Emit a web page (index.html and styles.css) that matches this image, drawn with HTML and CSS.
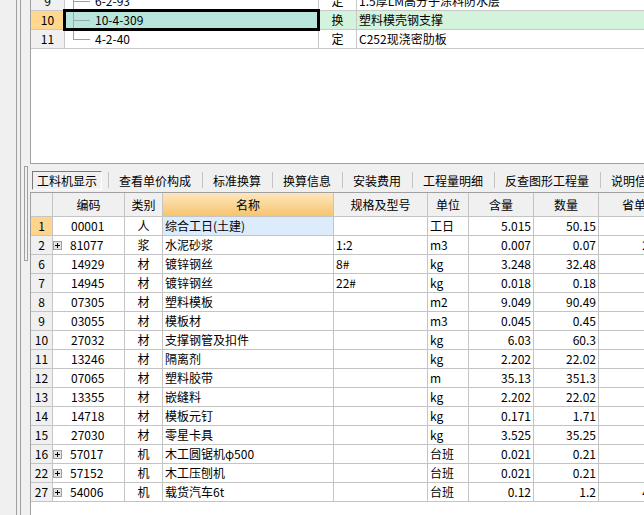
FILE: index.html
```html
<!DOCTYPE html>
<html lang="zh-CN">
<head>
<meta charset="utf-8">
<title>工料机显示</title>
<link rel="stylesheet" href="styles.css">
</head>
<body>
<div class="app">
  <div class="rail-strip">
    <div class="rail"></div>
    <div class="handle"></div>
  </div>
  <div class="main">
    <div class="upper">
      <div class="ugrid">
        <div class="uc un">9</div>
        <div class="uc ucode"><svg class="tree" width="30" height="18" viewBox="0 0 30 18"><path d="M8.5 -1V19M8 9.5H25" stroke="#a0a0a0"/></svg>6-2-93</div>
        <div class="uc utype">定</div>
        <div class="uc uname">1.5厚LM高分子涂料防水层</div>

        <div class="uc un sel-num">10</div>
        <div class="uc ucode sel-code"><svg class="tree" width="30" height="18" viewBox="0 0 30 18"><path d="M8.5 -1V19M8 9.5H25" stroke="#9aa8a6"/></svg>10-4-309</div>
        <div class="uc utype green">换</div>
        <div class="uc uname green">塑料模壳钢支撑</div>

        <div class="uc un">11</div>
        <div class="uc ucode"><svg class="tree" width="30" height="18" viewBox="0 0 30 18"><path d="M8.5 -1V9.5M8 9.5H25" stroke="#a0a0a0"/></svg>4-2-40</div>
        <div class="uc utype">定</div>
        <div class="uc uname">C252现浇密肋板</div>
      </div>
    </div>

    <div class="tabbar">
      <div class="tab tab-active">工料机显示</div>
      <div class="sep"></div>
      <div class="tab">查看单价构成</div>
      <div class="sep"></div>
      <div class="tab">标准换算</div>
      <div class="sep"></div>
      <div class="tab">换算信息</div>
      <div class="sep"></div>
      <div class="tab">安装费用</div>
      <div class="sep"></div>
      <div class="tab">工程量明细</div>
      <div class="sep"></div>
      <div class="tab">反查图形工程量</div>
      <div class="sep"></div>
      <div class="tab">说明信息</div>
    </div>

    <div class="lower">
      <div class="lgrid">
        <div class="h"></div>
        <div class="h">编码</div>
        <div class="h">类别</div>
        <div class="h h-sort">名称</div>
        <div class="h">规格及型号</div>
        <div class="h">单位</div>
        <div class="h">含量</div>
        <div class="h">数量</div>
        <div class="h">省单价</div>

        <div class="c n n-sel">1</div>
        <div class="c code">00001</div>
        <div class="c ctr">人</div>
        <div class="c l name-sel">综合工日(土建)</div>
        <div class="c l"></div>
        <div class="c l">工日</div>
        <div class="c r">5.015</div>
        <div class="c r">50.15</div>
        <div class="c r"></div>

        <div class="c n">2</div>
        <div class="c code has-plus"><svg class="plus" width="9" height="9" viewBox="0 0 9 9"><rect x="0.5" y="0.5" width="8" height="8" fill="#e4e4e4" stroke="#a0a0a0"/><path d="M2 4.5H7M4.5 2V7" stroke="#000"/></svg>81077</div>
        <div class="c ctr">浆</div>
        <div class="c l">水泥砂浆</div>
        <div class="c l">1:2</div>
        <div class="c l">m3</div>
        <div class="c r">0.007</div>
        <div class="c r">0.07</div>
        <div class="c r">229.35</div>

        <div class="c n">6</div>
        <div class="c code">14929</div>
        <div class="c ctr">材</div>
        <div class="c l">镀锌钢丝</div>
        <div class="c l">8#</div>
        <div class="c l">kg</div>
        <div class="c r">3.248</div>
        <div class="c r">32.48</div>
        <div class="c r"></div>

        <div class="c n">7</div>
        <div class="c code">14945</div>
        <div class="c ctr">材</div>
        <div class="c l">镀锌钢丝</div>
        <div class="c l">22#</div>
        <div class="c l">kg</div>
        <div class="c r">0.018</div>
        <div class="c r">0.18</div>
        <div class="c r"></div>

        <div class="c n">8</div>
        <div class="c code">07305</div>
        <div class="c ctr">材</div>
        <div class="c l">塑料模板</div>
        <div class="c l"></div>
        <div class="c l">m2</div>
        <div class="c r">9.049</div>
        <div class="c r">90.49</div>
        <div class="c r"></div>

        <div class="c n">9</div>
        <div class="c code">03055</div>
        <div class="c ctr">材</div>
        <div class="c l">模板材</div>
        <div class="c l"></div>
        <div class="c l">m3</div>
        <div class="c r">0.045</div>
        <div class="c r">0.45</div>
        <div class="c r"></div>

        <div class="c n">10</div>
        <div class="c code">27032</div>
        <div class="c ctr">材</div>
        <div class="c l">支撑钢管及扣件</div>
        <div class="c l"></div>
        <div class="c l">kg</div>
        <div class="c r">6.03</div>
        <div class="c r">60.3</div>
        <div class="c r"></div>

        <div class="c n">11</div>
        <div class="c code">13246</div>
        <div class="c ctr">材</div>
        <div class="c l">隔离剂</div>
        <div class="c l"></div>
        <div class="c l">kg</div>
        <div class="c r">2.202</div>
        <div class="c r">22.02</div>
        <div class="c r"></div>

        <div class="c n">12</div>
        <div class="c code">07065</div>
        <div class="c ctr">材</div>
        <div class="c l">塑料胶带</div>
        <div class="c l"></div>
        <div class="c l">m</div>
        <div class="c r">35.13</div>
        <div class="c r">351.3</div>
        <div class="c r"></div>

        <div class="c n">13</div>
        <div class="c code">13355</div>
        <div class="c ctr">材</div>
        <div class="c l">嵌缝料</div>
        <div class="c l"></div>
        <div class="c l">kg</div>
        <div class="c r">2.202</div>
        <div class="c r">22.02</div>
        <div class="c r"></div>

        <div class="c n">14</div>
        <div class="c code">14718</div>
        <div class="c ctr">材</div>
        <div class="c l">模板元钉</div>
        <div class="c l"></div>
        <div class="c l">kg</div>
        <div class="c r">0.171</div>
        <div class="c r">1.71</div>
        <div class="c r"></div>

        <div class="c n">15</div>
        <div class="c code">27030</div>
        <div class="c ctr">材</div>
        <div class="c l">零星卡具</div>
        <div class="c l"></div>
        <div class="c l">kg</div>
        <div class="c r">3.525</div>
        <div class="c r">35.25</div>
        <div class="c r"></div>

        <div class="c n">16</div>
        <div class="c code has-plus"><svg class="plus" width="9" height="9" viewBox="0 0 9 9"><rect x="0.5" y="0.5" width="8" height="8" fill="#e4e4e4" stroke="#a0a0a0"/><path d="M2 4.5H7M4.5 2V7" stroke="#000"/></svg>57017</div>
        <div class="c ctr">机</div>
        <div class="c l">木工圆锯机φ500</div>
        <div class="c l"></div>
        <div class="c l">台班</div>
        <div class="c r">0.021</div>
        <div class="c r">0.21</div>
        <div class="c r"></div>

        <div class="c n">22</div>
        <div class="c code has-plus"><svg class="plus" width="9" height="9" viewBox="0 0 9 9"><rect x="0.5" y="0.5" width="8" height="8" fill="#e4e4e4" stroke="#a0a0a0"/><path d="M2 4.5H7M4.5 2V7" stroke="#000"/></svg>57152</div>
        <div class="c ctr">机</div>
        <div class="c l">木工压刨机</div>
        <div class="c l"></div>
        <div class="c l">台班</div>
        <div class="c r">0.021</div>
        <div class="c r">0.21</div>
        <div class="c r"></div>

        <div class="c n">27</div>
        <div class="c code has-plus"><svg class="plus" width="9" height="9" viewBox="0 0 9 9"><rect x="0.5" y="0.5" width="8" height="8" fill="#e4e4e4" stroke="#a0a0a0"/><path d="M2 4.5H7M4.5 2V7" stroke="#000"/></svg>54006</div>
        <div class="c ctr">机</div>
        <div class="c l">载货汽车6t</div>
        <div class="c l"></div>
        <div class="c l">台班</div>
        <div class="c r">0.12</div>
        <div class="c r">1.2</div>
        <div class="c r">423.96</div>
      </div>
    </div>
  </div>
</div>
</body>
</html>
```

FILE: styles.css
```css
* { box-sizing: border-box; }
html, body { margin: 0; padding: 0; }
body {
  width: 644px;
  height: 515px;
  overflow: hidden;
  background: #f0f0f0;
  font-family: "Noto Sans CJK SC", "Liberation Sans", sans-serif;
  font-size: 12px;
  color: #000;
}
.app { display: flex; height: 515px; }

/* left splitter rail */
.rail-strip { width: 30px; flex: none; display: flex; align-items: flex-start; }
.rail {
  margin-left: 16px;
  width: 5px;
  height: 515px;
  border-left: 1px solid #a0a0a0;
  border-right: 1px solid #a0a0a0;
}
.handle {
  margin-left: 3px;
  margin-top: 166px;
  width: 4px;
  height: 95px;
  border: 1px solid #a0a0a0;
}

.main { flex: 1; min-width: 0; display: flex; flex-direction: column; overflow: hidden; }

/* upper grid */
.upper {
  height: 164px;
  flex: none;
  background: #fff;
  border-left: 1px solid #a0a0a0;
  border-bottom: 1px solid #a0a0a0;
  overflow: hidden;
}
.ugrid {
  margin-top: -8px;
  display: grid;
  grid-template-columns: 33px 253px 37px 344px;
  grid-auto-rows: 18px;
  gap: 1px;
  padding-bottom: 1px;
  background: #c8c8c8;
  width: max-content;
}
.uc { background: #fff; line-height: 18px; white-space: nowrap; }
.un { background: #f0f0f0; text-align: center; }
.sel-num { background: #ffd78e; }
.ucode { display: flex; align-items: center; }
.tree { flex: none; overflow: visible; }
.sel-code { background: #b8e5dc; position: relative; overflow: visible; }
.sel-code::after {
  content: "";
  position: absolute;
  left: -2px; right: -2px; top: -2px; bottom: -2px;
  border: 3px solid #000;
}
.utype { text-align: center; }
.uname { padding-left: 2px; overflow: hidden; }
.green { background: #d3f3dc; }

/* tab bar */
.tabbar {
  height: 28px;
  flex: none;
  display: flex;
  align-items: flex-start;
  padding-top: 7px;
  white-space: nowrap;
}
.tab { height: 19px; line-height: 19px; padding: 0 11px 0 10px; flex: none; }
.tab-active {
  margin-left: 2px;
  margin-right: 6px;
  padding: 0 4px 0 4px;
  line-height: 17px;
  border: 1px solid;
  border-color: #7a7a7a #ffffff #ffffff #7a7a7a;
  background: #f0f0f0;
}
.sep { width: 1px; height: 16px; margin-top: 1px; background: #c4c4c4; flex: none; }

/* lower grid */
.lower {
  flex: 1;
  background: #fff;
  border-left: 1px solid #a0a0a0;
  overflow: hidden;
}
.lgrid {
  display: grid;
  grid-template-columns: 21px 71px 37px 170px 93px 40px 64px 64px 82px;
  grid-template-rows: 23px;
  grid-auto-rows: 18px;
  gap: 1px;
  padding-bottom: 1px;
  background: #c4c4c4;
  border-top: 1px solid #a0a0a0;
  width: max-content;
}
.h { background: #f0f0f0; line-height: 23px; text-align: center; white-space: nowrap; overflow: hidden; }
.h-sort { background: linear-gradient(#fde7bd, #f5c46f); }
.c { background: #fff; line-height: 18px; white-space: nowrap; overflow: hidden; }
.n { background: #f0f0f0; text-align: center; }
.n-sel { background: #ffd48b; }
.name-sel { background: #dcecfd; }
.code { display: flex; align-items: center; padding-left: 18px; }
.code.has-plus { padding-left: 0; }
.plus { flex: none; margin-right: 8px; }
.ctr { text-align: center; }
.l { padding-left: 2px; }
.r { text-align: right; padding-right: 2px; }
```
